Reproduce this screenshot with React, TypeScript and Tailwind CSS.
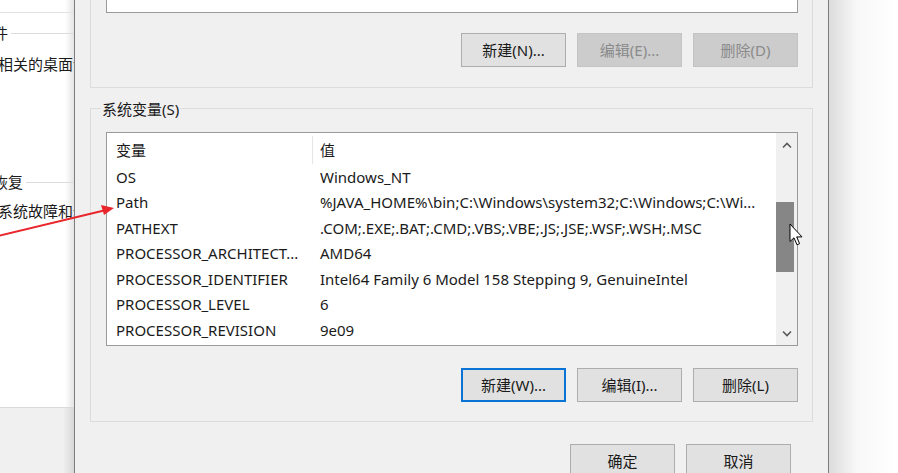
import React from "react";

const rows: [string, string][] = [
  ["OS", "Windows_NT"],
  ["Path", "%JAVA_HOME%\\bin;C:\\Windows\\system32;C:\\Windows;C:\\Wi..."],
  ["PATHEXT", ".COM;.EXE;.BAT;.CMD;.VBS;.VBE;.JS;.JSE;.WSF;.WSH;.MSC"],
  ["PROCESSOR_ARCHITECT...", "AMD64"],
  ["PROCESSOR_IDENTIFIER", "Intel64 Family 6 Model 158 Stepping 9, GenuineIntel"],
  ["PROCESSOR_LEVEL", "6"],
  ["PROCESSOR_REVISION", "9e09"],
];

function Btn({ label, disabled, focused }: { label: string; disabled?: boolean; focused?: boolean }) {
  if (disabled)
    return (
      <div className="w-[105px] h-[34px] flex items-center justify-center bg-[#cccccc] border border-[#c4c4c4] text-[#8a8a8a]">
        {label}
      </div>
    );
  if (focused)
    return (
      <div className="w-[105px] h-[34px] flex items-center justify-center bg-[#e1e1e1] border-2 border-[#0a74d6] text-[#1a1a1a]">
        {label}
      </div>
    );
  return (
    <div className="w-[105px] h-[34px] flex items-center justify-center bg-[#e1e1e1] border border-[#adadad] text-[#1a1a1a]">
      {label}
    </div>
  );
}

export default function App() {
  return (
    <div className="relative w-[898px] h-[473px] flex overflow-hidden bg-white font-['Noto_Sans','Noto_Sans_CJK_SC',sans-serif] text-[15px] text-[#1a1a1a]">
      {/* background window on the left */}
      <div className="w-[74px] shrink-0 flex flex-col overflow-hidden bg-white bg-gradient-to-r from-white from-[88%] to-[#e4e4e4]">
        <div className="h-[13px] shrink-0 border-b border-[#e2e2e2]" />
        <div className="ml-[-82px] mt-[10px] h-[20px] flex items-center whitespace-nowrap">
          <span>用户配置文件</span>
          <div className="ml-[3px] w-[80px] h-px bg-[#dcdcdc]" />
        </div>
        <div className="ml-[-77px] mt-[11px] h-[20px] flex items-center whitespace-nowrap">
          与登录帐户相关的桌面设置
        </div>
        <div className="ml-[-82px] mt-[98px] h-[20px] flex items-center whitespace-nowrap">
          <span>启动和故障恢复</span>
          <div className="ml-[3px] w-[80px] h-px bg-[#dcdcdc]" />
        </div>
        <div className="ml-[-77px] mt-[9px] h-[20px] flex items-center whitespace-nowrap">
          系统启动、系统故障和调试信息
        </div>
        <div className="mt-[186px] flex-1 border-t border-[#dadada] bg-[#f0f0f0] bg-gradient-to-r from-[#f0f0f0] from-[85%] to-[#d8d8d8]" />
      </div>

      {/* dialog */}
      <div className="w-[755px] shrink-0 bg-[#f0f0f0] border-x border-[#7d7d7d] px-[15px] flex flex-col">
        {/* user variables group (top cut off) */}
        <div className="border-x border-b border-[#dcdcdc] pl-[15px] pr-[14px] pb-[20px] flex flex-col">
          <div className="h-[13px] bg-white border-x border-b border-[#9a9a9a]" />
          <div className="mt-[20px] flex justify-end gap-[11px]">
            <Btn label="新建(N)..." />
            <Btn label="编辑(E)..." disabled />
            <Btn label="删除(D)" disabled />
          </div>
        </div>

        {/* system variables group */}
        <div className="relative mt-[20px] border border-[#dcdcdc] pl-[15px] pr-[14px] pt-[23px] pb-[19px] flex flex-col">
          <div className="absolute left-[10px] top-[-11px] px-[1px] bg-[#f0f0f0] leading-[22px]">系统变量(S)</div>
          <div className="h-[214px] bg-white border border-[#9a9a9a] flex">
            <div className="flex-1 flex flex-col">
              <div className="h-[31px] pt-[3px] flex items-center">
                <div className="w-[205px] pl-[9px]">变量</div>
                <div className="w-px h-[28px] bg-[#e5e5e5]" />
                <div className="pl-[7px]">值</div>
              </div>
              {rows.map(([k, v]) => (
                <div key={k} className="h-[25.5px] flex items-center whitespace-nowrap">
                  <div className="w-[206px] pl-[9px]">{k}</div>
                  <div className="pl-[7px]">{v}</div>
                </div>
              ))}
            </div>
            <div className="w-[21px] bg-[#f0f0f0] flex flex-col">
              <div className="h-[24px] flex items-center justify-center">
                <svg width="10" height="7" viewBox="0 0 10 7">
                  <path d="M1 5.5 L5 1.5 L9 5.5" fill="none" stroke="#5a5a5a" strokeWidth="1.6" />
                </svg>
              </div>
              <div className="mt-[45px] w-[18px] h-[70px] bg-[#868686]" />
              <div className="flex-1" />
              <div className="h-[24px] flex items-center justify-center">
                <svg width="10" height="7" viewBox="0 0 10 7">
                  <path d="M1 1.5 L5 5.5 L9 1.5" fill="none" stroke="#5a5a5a" strokeWidth="1.6" />
                </svg>
              </div>
            </div>
          </div>
          <div className="mt-[22px] flex justify-end gap-[11px]">
            <Btn label="新建(W)..." focused />
            <Btn label="编辑(I)..." />
            <Btn label="删除(L)" />
          </div>
        </div>

        <div className="mt-[22px] pr-[22px] flex justify-end gap-[11px]">
          <Btn label="确定" />
          <Btn label="取消" />
        </div>
      </div>

      {/* shadow right of dialog */}
      <div className="flex-1 bg-gradient-to-r from-[#dcdcdc] via-[#f8f8f8] via-[40%] to-white" />

      {/* red annotation arrow */}
      <svg className="absolute left-0 top-0 pointer-events-none" width="898" height="473">
        <line x1="-2" y1="236" x2="104" y2="210.5" stroke="#e8262b" strokeWidth="2" />
        <polygon points="114,208 101,205 104,215" fill="#e8262b" />
      </svg>

      {/* mouse cursor */}
      <svg className="absolute left-[789px] top-[223px] pointer-events-none" width="16" height="25" viewBox="0 0 16 25">
        <path
          d="M1 1 L1 18.5 L5 14.8 L8 21.8 L10.6 20.7 L7.7 13.9 L13 13.9 Z"
          fill="#ffffff"
          stroke="#000000"
          strokeWidth="1"
          strokeLinejoin="miter"
        />
      </svg>
    </div>
  );
}
